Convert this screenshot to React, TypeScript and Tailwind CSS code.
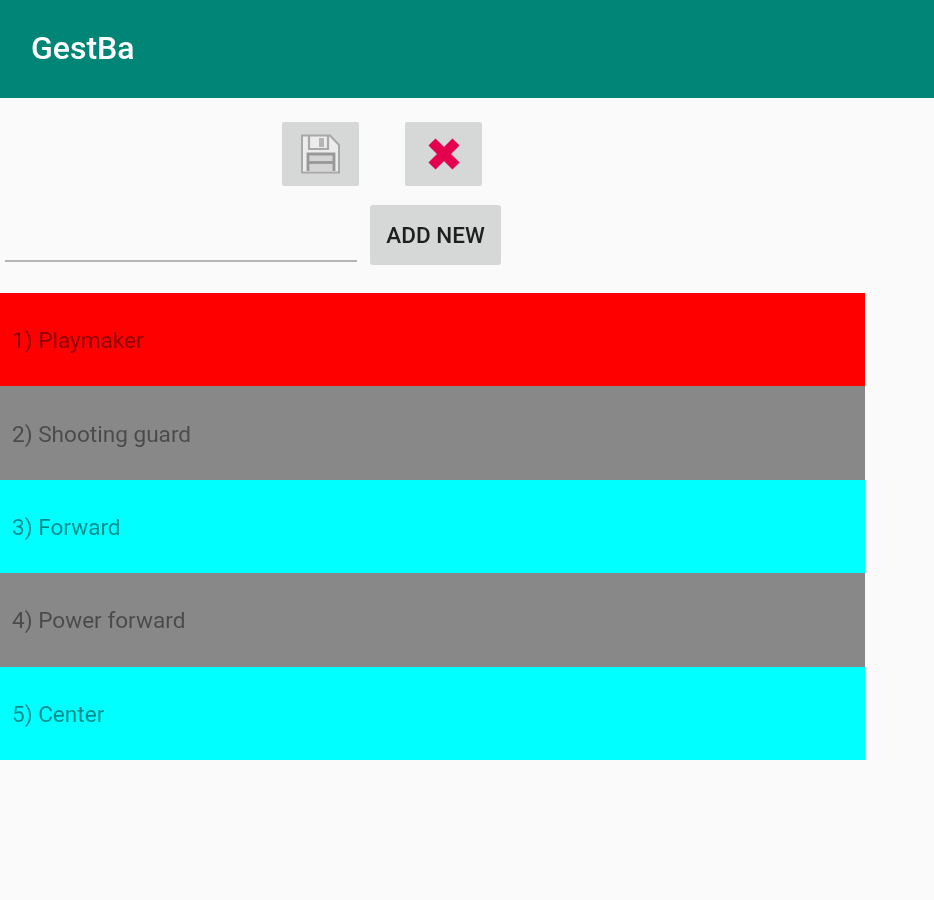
import React from 'react';

const positions = [
  { label: '1) Playmaker', bg: 'bg-[#ff0000]' },
  { label: '2) Shooting guard', bg: 'bg-[#888888]' },
  { label: '3) Forward', bg: 'bg-[#00ffff]' },
  { label: '4) Power forward', bg: 'bg-[#888888]' },
  { label: '5) Center', bg: 'bg-[#00ffff]' },
];

function SaveIcon() {
  return (
    <svg width="42" height="42" viewBox="0 0 42 42" fill="none" stroke="#a8a8a8" strokeWidth="2" className="blur-[0.7px]">
      <path d="M2 2.5h28l9 9.5v27.5H2z" fill="#ececec" />
      <path d="M9 3v13h19V3" strokeWidth="2.2" />
      <path d="M19 5h5v9h-5z" fill="#b5b5b5" stroke="none" />
      <path d="M8 38v-17h26v17" strokeWidth="2.8" stroke="#989898" fill="#d4d4d4" />
      <path d="M8 29.5h26" strokeWidth="2.8" stroke="#989898" />
    </svg>
  );
}

function CloseIcon() {
  return (
    <svg width="36" height="36" viewBox="0 0 36 36" fill="none" stroke="#e5004f" strokeWidth="10" className="blur-[0.5px]">
      <path d="M6 6l24 24M30 6L6 30" />
    </svg>
  );
}

export default function App() {
  return (
    <div className="min-h-[900px] bg-[#fafafa] font-['Roboto',sans-serif]">
      {/* App bar */}
      <div className="h-[98px] bg-[#008577] flex items-center pl-[31px] pb-[2px]">
        <span className="text-[32px] font-medium text-white blur-[0.5px]">GestBa</span>
      </div>

      {/* Icon buttons */}
      <div className="flex gap-[46px] pl-[282px] pt-[24px]">
        <button className="w-[77px] h-[64px] bg-[#d6d7d7] rounded-[2px] flex items-center justify-center">
          <SaveIcon />
        </button>
        <button className="w-[77px] h-[64px] bg-[#d6d7d7] rounded-[2px] flex items-center justify-center">
          <CloseIcon />
        </button>
      </div>

      {/* New entry */}
      <div className="flex items-start pt-[19px] pl-[5px]">
        <div className="w-[352px] h-[57px] border-b-2 border-[#b5b5b5]"></div>
        <button className="ml-[13px] w-[131px] h-[60px] bg-[#d6d7d7] rounded-[3px] text-[22.5px] font-medium text-[#1f1f1f] pt-[1px] blur-[0.3px]">
          ADD NEW
        </button>
      </div>

      {/* Positions list */}
      <div className="mt-[28px] w-[865px]">
        {positions.map((item) => (
          <div key={item.label} className={`h-[93.4px] flex items-center pl-[12px] pt-[3px] ${item.bg}`}>
            <span className="text-[22.6px] text-black/45 blur-[0.5px]">{item.label}</span>
          </div>
        ))}
      </div>
    </div>
  );
}
